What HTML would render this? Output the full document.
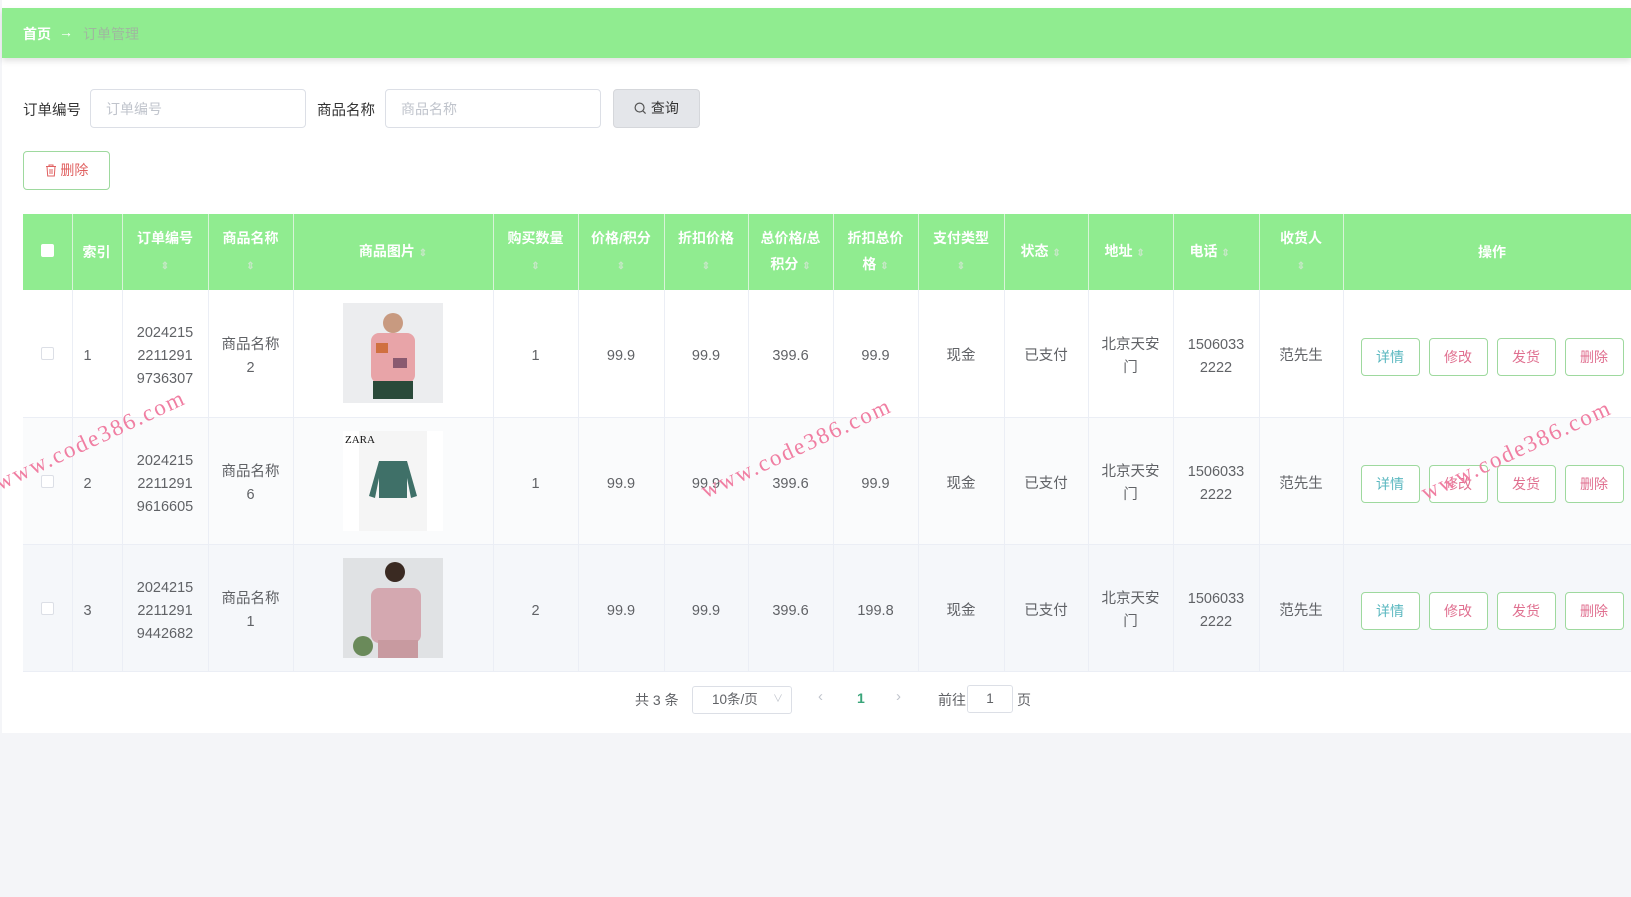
<!DOCTYPE html>
<html><head><meta charset="utf-8"><style>
*{box-sizing:border-box;margin:0;padding:0}
body{width:1631px;height:897px;background:#f4f5f8;font-family:"Liberation Sans","Noto Sans CJK SC",sans-serif;font-size:14.5px;color:#606266;position:relative;overflow:hidden}
.main{position:absolute;left:2px;top:0;width:1629px;height:733px;background:#fff}
.hdr{position:absolute;left:2px;top:8px;width:1629px;height:50px;background:#90ec90;box-shadow:0 3px 6px rgba(0,0,0,.12)}
.hdr span{position:absolute;top:16px;font-size:14px}
.lbl{position:absolute;top:99px;color:#333;font-size:14.5px}
.inp{position:absolute;top:89px;height:39px;border:1px solid #dcdfe6;border-radius:4px;color:#c0c4cc;padding:9px 15px;font-size:14px}
.btn{position:absolute;border-radius:4px;font-size:14px;text-align:center}
table{position:absolute;left:23px;top:214px;border-collapse:collapse;table-layout:fixed;width:1608px}
th{background:#90ec90;color:#fff;font-weight:bold;height:76px;border-right:1px solid #d8f4d8;font-size:14px;line-height:26px;text-align:center;vertical-align:middle}
td{border-right:1px solid #ebeef5;border-bottom:1px solid #ebeef5;text-align:center;vertical-align:middle;line-height:23px;color:#606266;padding-top:7px}
tr.r td{height:127px}
tr.r2 td{background:#fafbfc}
tr.r3 td{background:#f5f7fa}
.car{color:#c7e8c7;font-size:10px}
.ab{display:inline-block;width:59px;height:38px;line-height:36px;border:1px solid #9ed99e;border-radius:4px;margin:0 4.5px;background:#fff;font-size:14px}
.cb{display:inline-block;width:13px;height:13px;border:1px solid #dcdfe6;border-radius:2px;background:#fff}
.wm{position:absolute;color:#f07ea2;font-family:"Liberation Serif",serif;font-size:23px;letter-spacing:2px;transform:rotate(-25deg);transform-origin:left bottom;white-space:nowrap}
</style></head><body>
<div class="main"></div>
<div class="hdr"><span style="left:21px;color:#fff;font-weight:bold">首页</span><span style="left:57px;color:#fff">→</span><span style="left:81px;color:#9fb89f">订单管理</span></div>
<div class="lbl" style="left:23px">订单编号</div>
<div class="inp" style="left:90px;width:216px">订单编号</div>
<div class="lbl" style="left:317px">商品名称</div>
<div class="inp" style="left:385px;width:216px">商品名称</div>
<div class="btn" style="left:613px;top:89px;width:87px;height:39px;background:#e4e6ea;border:1px solid #d5d7db;line-height:37px;color:#333">
<svg width="13" height="13" viewBox="0 0 14 14" style="vertical-align:-2px"><circle cx="6" cy="6" r="4.8" fill="none" stroke="#555" stroke-width="1.3"/><path d="M9.5 9.5L12.5 12.5" stroke="#555" stroke-width="1.3"/></svg> 查询</div>
<div class="btn" style="left:23px;top:151px;width:87px;height:39px;border:1px solid #9ed99e;line-height:37px;color:#e06060">
<svg width="12" height="13" viewBox="0 0 12 13" style="vertical-align:-2px"><path d="M1 2.5h10M4 2.5V1h4v1.5M2 2.5l.7 9.5h6.6L10 2.5M5 5v5M7 5v5" fill="none" stroke="#e06060" stroke-width="1"/></svg> 删除</div>
<table>
<colgroup><col style="width:49px"><col style="width:50px"><col style="width:86px"><col style="width:85px"><col style="width:200px"><col style="width:85px"><col style="width:86px"><col style="width:84px"><col style="width:85px"><col style="width:85px"><col style="width:86px"><col style="width:84px"><col style="width:85px"><col style="width:86px"><col style="width:84px"><col style="width:288px"></colgroup>
<tr><th><span class="cb" style="border-color:#fff"></span></th><th style="text-align:left;padding-left:10px">索引</th><th>订单编号<br><span class="car">⇕</span></th><th>商品名称<br><span class="car">⇕</span></th><th>商品图片 <span class="car">⇕</span></th><th>购买数量<br><span class="car">⇕</span></th><th>价格/积分<br><span class="car">⇕</span></th><th>折扣价格<br><span class="car">⇕</span></th><th>总价格/总<br>积分 <span class="car">⇕</span></th><th>折扣总价<br>格 <span class="car">⇕</span></th><th>支付类型<br><span class="car">⇕</span></th><th style="text-align:left;padding-left:16px">状态 <span class="car">⇕</span></th><th style="text-align:left;padding-left:16px">地址 <span class="car">⇕</span></th><th style="text-align:left;padding-left:16px">电话 <span class="car">⇕</span></th><th>收货人<br><span class="car">⇕</span></th><th style="padding-left:10px">操作</th></tr>
<tr class="r"><td><span class="cb"></span></td><td style="text-align:left;padding-left:11px">1</td><td>2024215<br>2211291<br>9736307</td><td>商品名称<br>2</td><td style="padding-top:0"><svg width="100" height="100" style="display:block;margin:0 auto"><rect width="100" height="100" fill="#ecedef"/><circle cx="50" cy="20" r="10" fill="#c89a80"/><rect x="28" y="30" width="44" height="50" rx="8" fill="#e8a4a8"/><rect x="33" y="40" width="12" height="10" fill="#d07040"/><rect x="50" y="55" width="14" height="10" fill="#8a5a70"/><rect x="30" y="78" width="40" height="18" fill="#2a4a3a"/></svg></td><td>1</td><td>99.9</td><td>99.9</td><td>399.6</td><td>99.9</td><td>现金</td><td>已支付</td><td>北京天安<br>门</td><td>1506033<br>2222</td><td>范先生</td><td style="padding-left:10px"><span class="ab" style="color:#5bb8c0">详情</span><span class="ab" style="color:#e07090">修改</span><span class="ab" style="color:#e07090">发货</span><span class="ab" style="color:#e07090">删除</span></td></tr>
<tr class="r r2"><td><span class="cb"></span></td><td style="text-align:left;padding-left:11px">2</td><td>2024215<br>2211291<br>9616605</td><td>商品名称<br>6</td><td style="padding-top:0"><svg width="100" height="100" style="display:block;margin:0 auto"><rect width="100" height="100" fill="#fff"/><rect x="16" y="0" width="68" height="100" fill="#f5f5f5"/><text x="2" y="12" font-size="11" font-family="Liberation Serif" fill="#111">ZARA</text><path d="M36 30h28l10 35-6 2-4-20v20H36V47l-4 20-6-2z" fill="#3f7068"/></svg></td><td>1</td><td>99.9</td><td>99.9</td><td>399.6</td><td>99.9</td><td>现金</td><td>已支付</td><td>北京天安<br>门</td><td>1506033<br>2222</td><td>范先生</td><td style="padding-left:10px"><span class="ab" style="color:#5bb8c0">详情</span><span class="ab" style="color:#e07090">修改</span><span class="ab" style="color:#e07090">发货</span><span class="ab" style="color:#e07090">删除</span></td></tr>
<tr class="r r3"><td><span class="cb"></span></td><td style="text-align:left;padding-left:11px">3</td><td>2024215<br>2211291<br>9442682</td><td>商品名称<br>1</td><td style="padding-top:0"><svg width="100" height="100" style="display:block;margin:0 auto"><rect width="100" height="100" fill="#e0e2e4"/><circle cx="52" cy="14" r="10" fill="#3a2a22"/><rect x="28" y="30" width="50" height="55" rx="8" fill="#d4a8b0"/><rect x="35" y="82" width="40" height="18" fill="#c89aa0"/><circle cx="20" cy="88" r="10" fill="#6a8a5a"/></svg></td><td>2</td><td>99.9</td><td>99.9</td><td>399.6</td><td>199.8</td><td>现金</td><td>已支付</td><td>北京天安<br>门</td><td>1506033<br>2222</td><td>范先生</td><td style="padding-left:10px"><span class="ab" style="color:#5bb8c0">详情</span><span class="ab" style="color:#e07090">修改</span><span class="ab" style="color:#e07090">发货</span><span class="ab" style="color:#e07090">删除</span></td></tr>
</table>
<div style="position:absolute;left:635px;top:690px;font-size:14px">共 3 条</div>
<div style="position:absolute;left:692px;top:686px;width:100px;height:28px;border:1px solid #dcdfe6;border-radius:3px;font-size:13.5px;line-height:26px;padding-left:19px">10条/页<span style="position:absolute;right:8px;color:#c0c4cc;font-size:10px">∨</span></div>
<div style="position:absolute;left:818px;top:688px;color:#c0c4cc;font-size:15px">‹</div>
<div style="position:absolute;left:857px;top:690px;color:#3aa57a;font-weight:bold;font-size:14px">1</div>
<div style="position:absolute;left:896px;top:688px;color:#c0c4cc;font-size:15px">›</div>
<div style="position:absolute;left:938px;top:690px;font-size:14px">前往</div>
<div style="position:absolute;left:967px;top:685px;width:46px;height:28px;border:1px solid #dcdfe6;border-radius:3px;text-align:center;line-height:26px;font-size:13.5px">1</div>
<div style="position:absolute;left:1017px;top:690px;font-size:14px">页</div>
<div class="wm" style="left:2px;top:470px">www.code386.com</div>
<div class="wm" style="left:708px;top:478px">www.code386.com</div>
<div class="wm" style="left:1428px;top:480px">www.code386.com</div>
</body></html>
